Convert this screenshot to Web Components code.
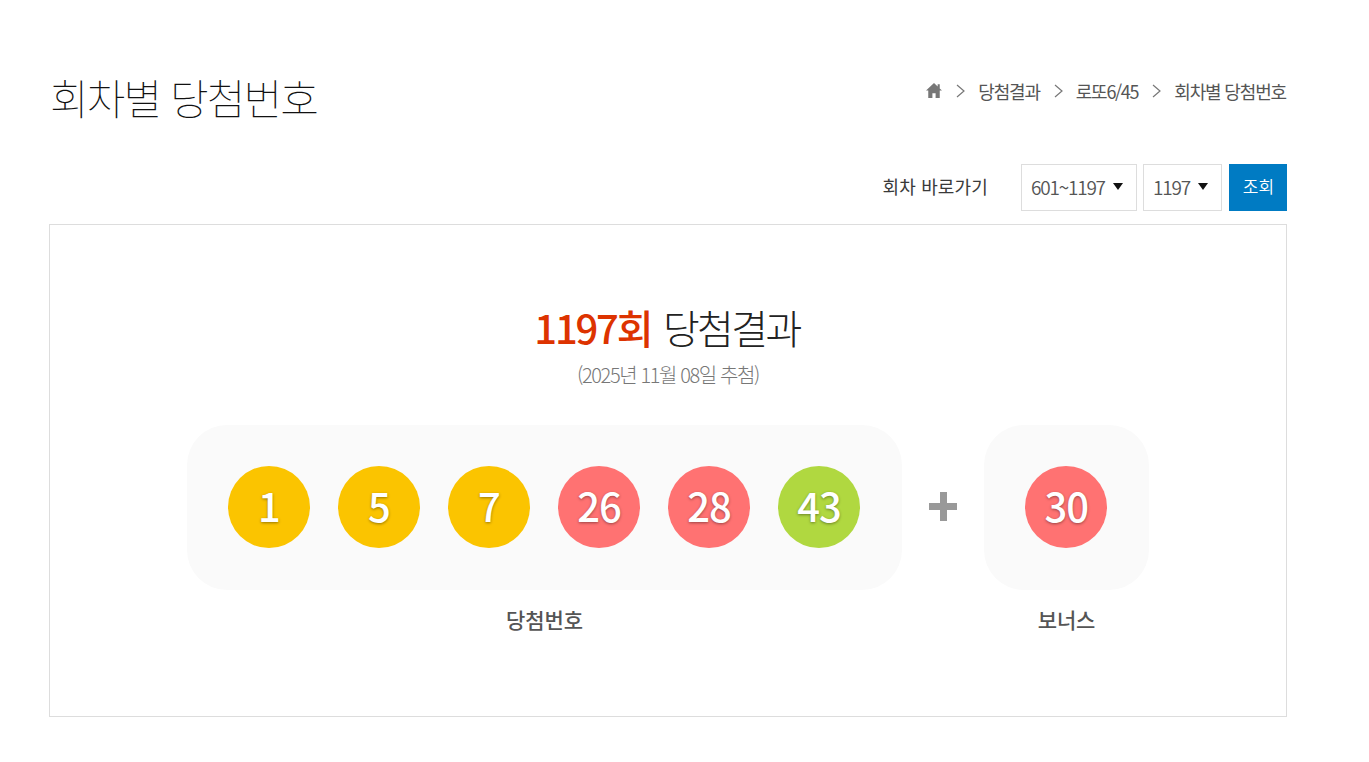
<!DOCTYPE html>
<html lang="ko"><head><meta charset="utf-8">
<style>
html,body{margin:0;background:#fff;font-family:"Noto Sans CJK KR","Noto Sans",sans-serif;}
</style></head><body>
<lotto-page>
  <page-head>
    <span slot="title">회차별 당첨번호</span>
    <bread-crumb></bread-crumb>
  </page-head>
  <round-picker></round-picker>
  <result-card>
    <span slot="round">1197회</span>
    <span slot="rest">당첨결과</span>
    <span slot="date">(2025년 11월 08일 추첨)</span>
    <ball-panel slot="main" label="당첨번호" pad="41px 42px 41px 41px">
      <lotto-ball color="#fbc400">1</lotto-ball>
      <lotto-ball color="#fbc400">5</lotto-ball>
      <lotto-ball color="#fbc400">7</lotto-ball>
      <lotto-ball color="#ff7272">26</lotto-ball>
      <lotto-ball color="#ff7272">28</lotto-ball>
      <lotto-ball color="#b0d840">43</lotto-ball>
    </ball-panel>
    <ball-panel slot="bonus" label="보너스" pad="41px 41.7px 41px 41.3px">
      <lotto-ball color="#ff7272">30</lotto-ball>
    </ball-panel>
  </result-card>
</lotto-page>
<script>
const F='"Noto Sans CJK KR","Noto Sans",sans-serif';
function def(name,html){customElements.define(name,class extends HTMLElement{constructor(){super();this.attachShadow({mode:'open'}).innerHTML=typeof html==='function'?html(this):html;}});}
def('lotto-page',`<style>:host{display:block;width:1238px;margin-left:49px;padding-top:68px;font-family:${F}}</style><slot></slot>`);
def('page-head',`<style>:host{display:flex;justify-content:space-between;align-items:flex-start;height:96px}
h2{margin:0;font-size:42px;font-weight:100;line-height:58px;letter-spacing:-1.9px;color:#111;padding-left:1px}</style><h2><slot name="title"></slot></h2><slot></slot>`);
const sep=`<svg class="sep" width="9" height="14" viewBox="0 0 9 14"><path fill="none" stroke="#777" stroke-width="1.2" d="M1 1l7 6-7 6"/></svg>`;
def('bread-crumb',`<style>:host{display:flex;align-items:center;height:45px;margin-right:1px;font-size:18px;letter-spacing:-1.15px;color:#555;font-weight:400}
svg{display:block;flex:none}.sep{margin:0 13px 0 14px}.num{letter-spacing:-1.3px}</style>
<svg class="home" width="16" height="15" viewBox="0 0 17 16" preserveAspectRatio="none"><path fill="#777" d="M8.5 0 0 8h2.4v8h4.4v-5.2h3.4V16h4.4V8H17L14.6 5.8V1.4h-2.2v2.2z"/></svg>
${sep}<span>당첨결과</span>${sep}<span class="num">로또6/45</span>${sep}<span>회차별 당첨번호</span>`);
def('round-picker',`<style>:host{display:flex;justify-content:flex-end;align-items:stretch;height:47px;margin-bottom:13px;color:#555}
.lb{font-size:18px;font-weight:400;color:#3a3a3a;align-self:center;margin-right:33px;margin-top:-3px;letter-spacing:.15px}
.sel{box-sizing:border-box;border:1px solid #ddd;display:flex;align-items:center;font-size:19px;font-weight:350;padding:0 0 2px 9px;color:#555;letter-spacing:-1.2px}
.sel i{width:0;height:0;border:5px solid transparent;border-top:7px solid #111;border-bottom:0;margin-left:8px}
.a{width:116px}.b{width:79px;margin-left:6px}
.go{width:58px;margin-left:7px;background:#007bc3;color:#fff;font-size:17px;font-weight:350;display:flex;align-items:center;justify-content:center;padding:0 0 5px 1px;box-sizing:border-box}</style>
<span class="lb">회차 바로가기</span><div class="sel a">601~1197<i></i></div><div class="sel b">1197<i></i></div><div class="go">조회</div>`);
def('result-card',`<style>:host{display:block;box-sizing:border-box;height:493px;border:1px solid #ddd;text-align:center}
h3{margin:69px 0 0;padding-right:2px;font-size:40px;font-weight:300;line-height:66px;color:#222;letter-spacing:-2.6px}
h3 b{font-weight:500;color:#dd3300;letter-spacing:-2.2px;margin-right:3px}
p{margin:0;font-size:20px;font-weight:300;line-height:30px;color:#777;letter-spacing:-1.4px}
.row{display:flex;justify-content:center;margin-top:35px}
.plus{width:82px;display:flex;justify-content:center;align-items:flex-start}
.plus svg{margin-top:67px}</style>
<h3><b><slot name="round"></slot></b> <slot name="rest"></slot></h3><p><slot name="date"></slot></p>
<div class="row"><slot name="main"></slot><div class="plus"><svg width="30" height="29" viewBox="0 0 30 29"><path fill="#999" d="M12 0h7v11h10v7H19v11h-7V18H1v-7h11z"/></svg></div><slot name="bonus"></slot></div>`);
def('ball-panel',el=>`<style>:host{display:block}
.box{display:flex;gap:28px;background:#fafafa;border-radius:40px;padding:${el.getAttribute('pad')};height:83px}
.lb{margin-top:13px;font-size:21px;font-weight:500;line-height:32px;color:#555;text-align:center;letter-spacing:-.1px}</style>
<div class="box"><slot></slot></div><div class="lb">${el.getAttribute('label')||''}</div>`);
def('lotto-ball',el=>`<style>:host{display:flex;align-items:center;justify-content:center;box-sizing:border-box;width:82px;height:82px;padding-bottom:4px;border-radius:50%;background:${el.getAttribute('color')};color:#fff;font-size:40px;font-weight:500;letter-spacing:-1px;text-shadow:0 1px 3px rgba(0,0,0,.4);line-height:1}</style><slot></slot>`);
</script>
</body></html>
